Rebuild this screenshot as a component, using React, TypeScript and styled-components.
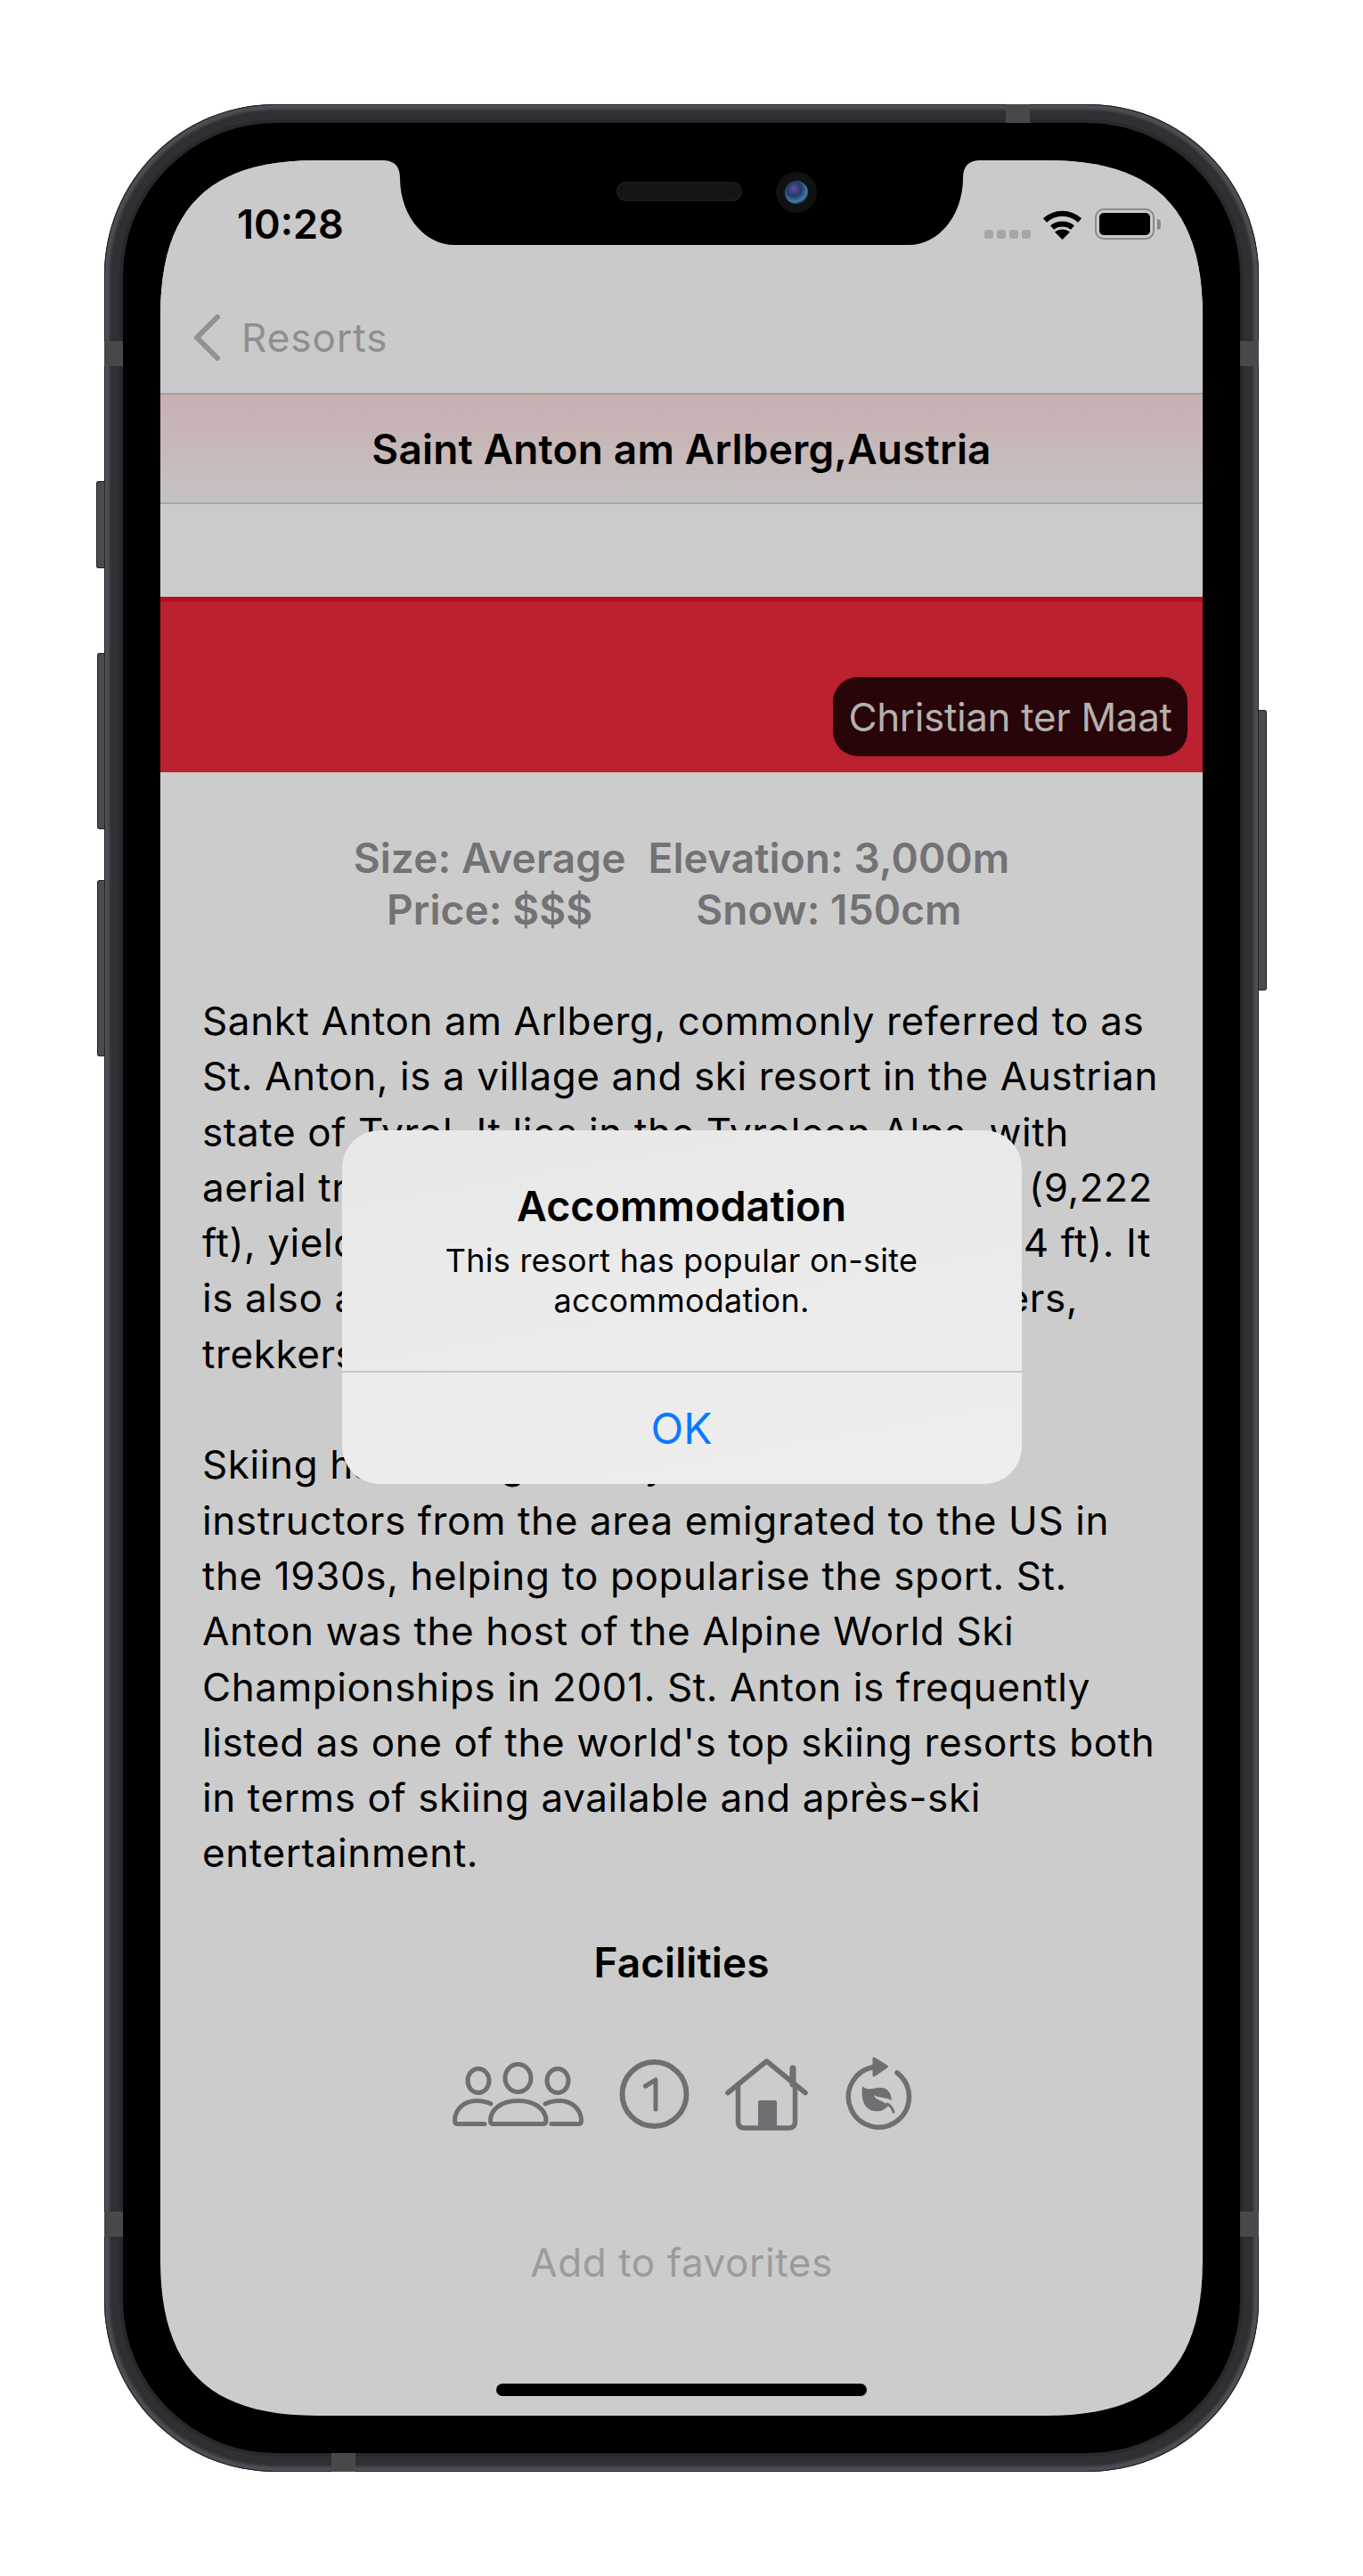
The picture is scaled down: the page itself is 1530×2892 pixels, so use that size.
import styled, { createGlobalStyle } from 'styled-components';

const GlobalStyle = createGlobalStyle`
	html, body {
		margin: 0;
		background: #fff;
	}
	body {
		font-family: Inter, "Liberation Sans", sans-serif;
	}
`;

const Page = styled.div`
	width: 1530px;
	height: 2892px;
	padding: 117px;
	box-sizing: border-box;
`;

const Device = styled.div`
	position: relative;
	width: 1296px;
	height: 2658px;
	padding: 21px;
	box-sizing: border-box;
	border-radius: 192px;
	background: #2f2f34;
	box-shadow: inset 0 0 0 1px #232327, inset 0 0 3px 6px #4e4e54;
`;

const Bezel = styled.div`
	height: 100%;
	padding: 42px;
	box-sizing: border-box;
	border-radius: 172px;
	background: #000;
	box-shadow: 0 0 0 4px #29292c;
`;

const SideButton = styled.div<{ $side: 'left' | 'right'; $top: number; $height: number; $width: number }>`
	position: absolute;
	top: ${(p) => p.$top}px;
	${(p) => p.$side}: -${(p) => p.$width}px;
	width: ${(p) => p.$width}px;
	height: ${(p) => p.$height}px;
	box-sizing: border-box;
	background: #4a4a4f;
	border: 1px solid #232327;
	border-${(p) => (p.$side === 'left' ? 'right' : 'left')}: none;
	border-radius: ${(p) => (p.$side === 'left' ? '3px 0 0 3px' : '0 3px 3px 0')};
`;

const Band = styled.div<{ $vertical?: boolean }>`
	position: absolute;
	background: #49494d;
	width: ${(p) => (p.$vertical ? '21px' : '27px')};
	height: ${(p) => (p.$vertical ? '28px' : '21px')};
`;

const Screen = styled.div`
	position: relative;
	height: 100%;
	display: flex;
	flex-direction: column;
	overflow: hidden;
	background: #cccccc;
	clip-path: path('M175 0H995C1116 0 1170 54 1170 175V2357C1170 2478 1116 2532 995 2532H175C54 2532 0 2478 0 2357V175C0 54 54 0 175 0Z');
`;

const NotchShape = styled.svg`
	position: absolute;
	top: 0;
	left: 235px;
	width: 700px;
	height: 96px;
`;

const Speaker = styled.div`
	position: absolute;
	top: 24px;
	left: 512px;
	width: 141px;
	height: 22px;
	box-sizing: border-box;
	border-radius: 11px;
	border: 2px solid #1b1b1b;
	background: #141414;
`;

const Camera = styled.svg`
	position: absolute;
	top: 13px;
	left: 691px;
	width: 46px;
	height: 46px;
`;

const Header = styled.header`
	background: #cbc9ca;
`;

const StatusBar = styled.div`
	height: 142px;
	display: flex;
	align-items: center;
	justify-content: space-between;
	padding: 0 46px 0 86px;
`;

const Time = styled.span`
	font-size: 45px;
	font-weight: 600;
	color: #000;
`;

const StatusIcons = styled.div`
	display: flex;
	align-items: flex-end;
`;

const SignalDots = styled.div`
	display: flex;
	gap: 4px;
	margin: 0 13px 1px 0;
`;

const Dot = styled.span`
	width: 10px;
	height: 10px;
	border-radius: 3px;
	background: #a6a6a6;
`;

const Battery = styled.div`
	position: relative;
	width: 67px;
	height: 35px;
	margin-left: 14px;
	margin-right: 8px;
	padding: 3px;
	box-sizing: border-box;
	border: 2px solid #8a8a8a;
	border-radius: 10px;
	&::after {
		content: '';
		position: absolute;
		top: 10px;
		right: -9px;
		width: 4px;
		height: 12px;
		border-radius: 0 4px 4px 0;
		background: #8a8a8a;
	}
`;

const BatteryFill = styled.div`
	height: 100%;
	border-radius: 5px;
	background: #000;
`;

const NavBar = styled.div`
	height: 114px;
	padding: 0 0 5px 37px;
	display: flex;
	align-items: center;
	gap: 24px;
	font-size: 44px;
	letter-spacing: 1px;
	color: #8f8e90;
`;

const TitleBand = styled.div`
	height: 125px;
	box-sizing: border-box;
	display: flex;
	align-items: center;
	justify-content: center;
	border-top: 2px solid #aa9a9c;
	border-bottom: 2px solid #a8a5a5;
	background: linear-gradient(#c9afb1, #c6c2c2);
	font-size: 46px;
	font-weight: 600;
	letter-spacing: 0.17px;
	color: #000;
`;

const Spacer = styled.div`
	height: 104px;
	background: #cbcbcb;
`;

const PhotoBand = styled.div`
	height: 197px;
	box-sizing: border-box;
	display: flex;
	align-items: flex-end;
	justify-content: flex-end;
	padding: 0 17px 18px 0;
	border-top: 6px solid #b80f1f;
	background: #bb212e;
`;

const Credit = styled.div`
	width: 398px;
	height: 89px;
	display: flex;
	align-items: center;
	justify-content: center;
	border-radius: 28px;
	background: #270508;
	color: #b5b0b0;
	font-size: 44px;
	letter-spacing: -0.35px;
`;

const Stats = styled.div`
	margin: 67px auto 0;
	display: grid;
	grid-template-columns: auto auto;
	column-gap: 25px;
	justify-items: center;
	font-size: 46px;
	line-height: 58px;
	font-weight: 600;
	letter-spacing: 0.1px;
	color: #737275;
`;

const Description = styled.div`
	margin-top: 65px;
	padding: 0 47px;
	font-size: 44px;
	line-height: 62.3px;
	letter-spacing: 0.6px;
	color: #000;
`;

const Line = styled.div<{ $width?: number }>`
	display: flex;
	justify-content: space-between;
	white-space: nowrap;
	min-height: 62.3px;
	${(p) => (p.$width ? `width: ${p.$width}px;` : '')}
`;

const SectionTitle = styled.div`
	margin-top: 61px;
	text-align: center;
	font-size: 46px;
	line-height: 60px;
	font-weight: 600;
	letter-spacing: 0.1px;
	color: #000;
`;

const Facilities = styled.div`
	margin-top: 75px;
	padding-left: 4px;
	height: 87px;
	display: flex;
	align-items: center;
	justify-content: center;
	gap: 40px;
`;

const IconStroke = styled.svg`
	fill: none;
	stroke: #6f6e72;
	stroke-linecap: round;
	stroke-linejoin: round;
	flex: none;
`;

const Favorites = styled.div`
	margin-top: 115px;
	text-align: center;
	font-size: 44px;
	line-height: 60px;
	letter-spacing: 0.6px;
	color: #9b9b9b;
`;

const HomeIndicator = styled.div`
	position: absolute;
	bottom: 22px;
	left: 377px;
	width: 416px;
	height: 14px;
	border-radius: 7px;
	background: #000;
`;

const Overlay = styled.div`
	position: absolute;
	inset: 0;
	display: flex;
	justify-content: center;
	padding-top: 1089px;
`;

const Alert = styled.div`
	width: 763px;
	height: 397px;
	display: flex;
	flex-direction: column;
	border-radius: 42px;
	overflow: hidden;
	background: linear-gradient(170deg, #e8e8e8, #eeeeee);
`;

const AlertBody = styled.div`
	height: 272px;
	box-sizing: border-box;
	padding-top: 60px;
	text-align: center;
	border-bottom: 2px solid #c6c6c6;
`;

const AlertTitle = styled.div`
	font-size: 46.7px;
	line-height: 50px;
	font-weight: 600;
	color: #000;
`;

const AlertMessage = styled.div`
	margin-top: 14px;
	font-size: 36px;
	line-height: 45px;
	letter-spacing: 0.25px;
	color: #000;
`;

const AlertButton = styled.div`
	flex: 1;
	display: flex;
	align-items: center;
	justify-content: center;
	font-size: 48px;
	color: #0a7aff;
`;

const stats = ['Size: Average', 'Elevation: 3,000m', 'Price: $$$', 'Snow: 150cm'];

const lines: { text: string; end?: string; width?: number }[] = [
	{ text: 'Sankt Anton am Arlberg, commonly referred to as' },
	{ text: 'St. Anton, is a village and ski resort in the Austrian' },
	{ text: 'state of Tyrol. It lies in the Tyrolean Alps, with' },
	{ text: 'aerial tramways to the Valluga at', end: '2,811 m (9,222', width: 1067 },
	{ text: 'ft), yielding a vertical drop of', end: '1,507 m (4,944 ft). It', width: 1065 },
	{ text: 'is also a popular destination for', end: 'hikers,', width: 983 },
	{ text: 'trekkers and skiers.' },
	{ text: '' },
	{ text: 'Skiing has a long history. Ski' },
	{ text: 'instructors from the area emigrated to the US in' },
	{ text: 'the 1930s, helping to popularise the sport. St.' },
	{ text: 'Anton was the host of the Alpine World Ski' },
	{ text: 'Championships in 2001. St. Anton is frequently' },
	{ text: "listed as one of the world's top skiing resorts both" },
	{ text: 'in terms of skiing available and après-ski' },
	{ text: 'entertainment.' },
];

function PeopleIcon() {
	return (
		<IconStroke width="147" height="72" viewBox="0 0 147 72" strokeWidth="5">
			<ellipse cx="29" cy="21" rx="12" ry="13.5" />
			<ellipse cx="73.5" cy="18" rx="14.5" ry="15.5" />
			<ellipse cx="118" cy="21" rx="12" ry="13.5" />
			<path d="M46 69.5H101Q105 69.5 105 66C105 53 92 43.5 73.5 43.5C55 43.5 42.5 53 42.5 66Q42.5 69.5 46 69.5Z" />
			<path d="M43 47C38 44.5 32 43.5 27 43.5C13 43.5 2.5 53 2.5 66Q2.5 69.5 6 69.5H36" />
			<path d="M104 47C109 44.5 115 43.5 120 43.5C134 43.5 144.5 53 144.5 66Q144.5 69.5 141 69.5H111" />
		</IconStroke>
	);
}

function NumberIcon() {
	return (
		<IconStroke width="79" height="78" viewBox="0 0 79 78" strokeWidth="6">
			<circle cx="39.5" cy="39" r="36" />
			<path d="M29.5 30L41 23V56" strokeWidth="5" />
		</IconStroke>
	);
}

function HouseIcon() {
	return (
		<IconStroke width="93" height="81" viewBox="0 0 93 81" strokeWidth="5.5">
			<path d="M3 38.5L46.5 3L90 38.5" />
			<path d="M14.5 29V71Q14.5 78 21.5 78H71.5Q78.5 78 78.5 71V29" />
			<path d="M76 11V29" strokeWidth="7" />
			<path d="M37 49Q37 47 39 47H56Q58 47 58 49V77H37Z" fill="#6f6e72" stroke="none" />
		</IconStroke>
	);
}

function RenewIcon() {
	return (
		<IconStroke width="79" height="87" viewBox="0 0 79 87" strokeWidth="5.5">
			<path d="M34 12.5A34 34 0 1 0 60 19" />
			<path d="M34 3L48.5 12L34 22Z" fill="#6f6e72" strokeWidth="3" />
			<path
				d="M21 34C26 39 30 37 38 36C47 35 53 39 54 50C47 46 40 48 34 44C36 51 44 49 50 56C44 64 32 64 26 58C21 53 20 44 21 34Z"
				fill="#6f6e72"
				stroke="none"
			/>
			<path d="M49 54C53 56 55 60 56 63" strokeWidth="3" />
		</IconStroke>
	);
}

function App() {
	return (
		<>
			<GlobalStyle />
			<Page>
				<Device>
					<SideButton $side="left" $top={423} $height={98} $width={9} />
					<SideButton $side="left" $top={616} $height={198} $width={8} />
					<SideButton $side="left" $top={871} $height={198} $width={8} />
					<SideButton $side="right" $top={680} $height={315} $width={9} />
					<Band $vertical style={{ left: 0, top: 266 }} />
					<Band $vertical style={{ right: 0, top: 266 }} />
					<Band $vertical style={{ left: 0, top: 2366 }} />
					<Band $vertical style={{ right: 0, top: 2366 }} />
					<Band style={{ right: 257, top: 0 }} />
					<Band style={{ left: 255, bottom: 0 }} />
					<Bezel>
						<Screen>
							<Header>
								<StatusBar>
									<Time>10:28</Time>
									<StatusIcons>
										<SignalDots>
											<Dot />
											<Dot />
											<Dot />
											<Dot />
										</SignalDots>
										<svg width="45" height="34" viewBox="0 0 45 34" fill="none" stroke="#000" strokeWidth="6">
											<path d="M3 12.5C14 2 31 2 42 12.5" />
											<path d="M11 20.5C17 15 28 15 34 20.5" />
											<path d="M22.5 34L14 25.5C19 21.5 26 21.5 31 25.5Z" fill="#000" stroke="none" />
										</svg>
										<Battery>
											<BatteryFill />
										</Battery>
									</StatusIcons>
								</StatusBar>
								<NavBar>
									<svg width="30" height="52" viewBox="0 0 30 52" fill="none" stroke="#919092" strokeWidth="6" strokeLinecap="round" strokeLinejoin="round">
										<path d="M27 3L4 26L27 49" />
									</svg>
									<span>Resorts</span>
								</NavBar>
							</Header>
							<TitleBand>Saint Anton am Arlberg,Austria</TitleBand>
							<Spacer />
							<PhotoBand>
								<Credit>Christian ter Maat</Credit>
							</PhotoBand>
							<Stats>
								{stats.map((s) => (
									<span key={s}>{s}</span>
								))}
							</Stats>
							<Description>
								{lines.map((l, i) => (
									<Line key={i} $width={l.width}>
										<span>{l.text}</span>
										{l.end && <span>{l.end}</span>}
									</Line>
								))}
							</Description>
							<SectionTitle>Facilities</SectionTitle>
							<Facilities>
								<PeopleIcon />
								<NumberIcon />
								<HouseIcon />
								<RenewIcon />
							</Facilities>
							<Favorites>Add to favorites</Favorites>
							<HomeIndicator />
							<Overlay>
								<Alert>
									<AlertBody>
										<AlertTitle>Accommodation</AlertTitle>
										<AlertMessage>
											This resort has popular on-site
											<br />
											accommodation.
										</AlertMessage>
									</AlertBody>
									<AlertButton>OK</AlertButton>
								</Alert>
							</Overlay>
							<NotchShape viewBox="0 0 700 96">
								<path d="M15 0C27 0 34 6 34 20C34 60 60 95 95 95H605C640 95 666 60 666 20C666 6 673 0 685 0Z" fill="#000" />
							</NotchShape>
							<Speaker />
							<Camera viewBox="0 0 46 46">
								<defs>
									<radialGradient id="lens" cx="0.4" cy="0.35" r="0.7">
										<stop offset="0" stopColor="#6a4aa8" />
										<stop offset="0.45" stopColor="#223a66" />
										<stop offset="0.8" stopColor="#3f7fa8" />
										<stop offset="1" stopColor="#101a30" />
									</radialGradient>
								</defs>
								<circle cx="23" cy="23" r="23" fill="#111" />
								<circle cx="23" cy="23" r="13" fill="url(#lens)" />
							</Camera>
						</Screen>
					</Bezel>
				</Device>
			</Page>
		</>
	);
}

export default App;
